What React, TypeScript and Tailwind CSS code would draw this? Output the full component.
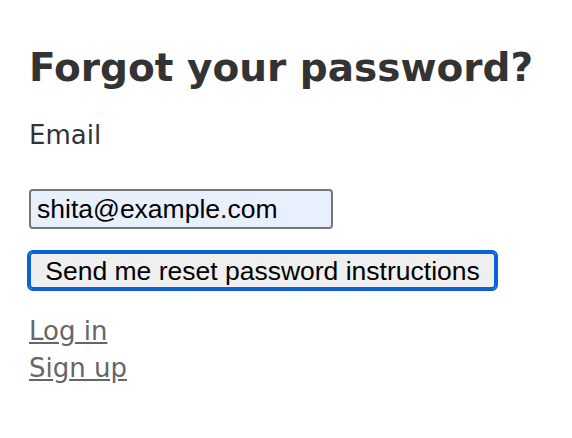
import React from "react";

export default function App() {
  return (
    <div className="min-h-[438px] w-[572px] bg-white px-[29px] pt-[44px] font-['DejaVu_Sans',sans-serif] text-[#333333]">
      <h1 className="whitespace-nowrap text-[39px] font-bold leading-[48px]">Forgot your password?</h1>
      <form className="flex flex-col items-start" onSubmit={(e) => e.preventDefault()}>
        <label htmlFor="email" className="mt-[29px] text-[26px] leading-[28px]">
          Email
        </label>
        <input
          id="email"
          type="email"
          defaultValue="shita@example.com"
          className="mt-[40px] box-border h-[40px] w-[304px] rounded-[4px] border-2 border-[#767676] bg-[#e8f0fe] pl-[6px] font-['Liberation_Sans',Arial,sans-serif] text-[26.5px] leading-[30px] text-black outline-none"
        />
        <button
          type="submit"
          className="mt-[23px] box-border flex h-[37px] w-[467px] items-center justify-center rounded-[4px] border-2 border-[#0b61d6] bg-[#efefef] font-['Liberation_Sans',Arial,sans-serif] text-[26.5px] leading-[30px] text-black outline-2 outline-solid outline-[#0b61d6]"
        >
          Send me reset password instructions
        </button>
      </form>
      <div className="mt-[24px] flex flex-col items-start text-[26px] leading-[37px] text-[#666666]">
        <a href="#" className="underline">Log in</a>
        <a href="#" className="underline">Sign up</a>
      </div>
    </div>
  );
}
